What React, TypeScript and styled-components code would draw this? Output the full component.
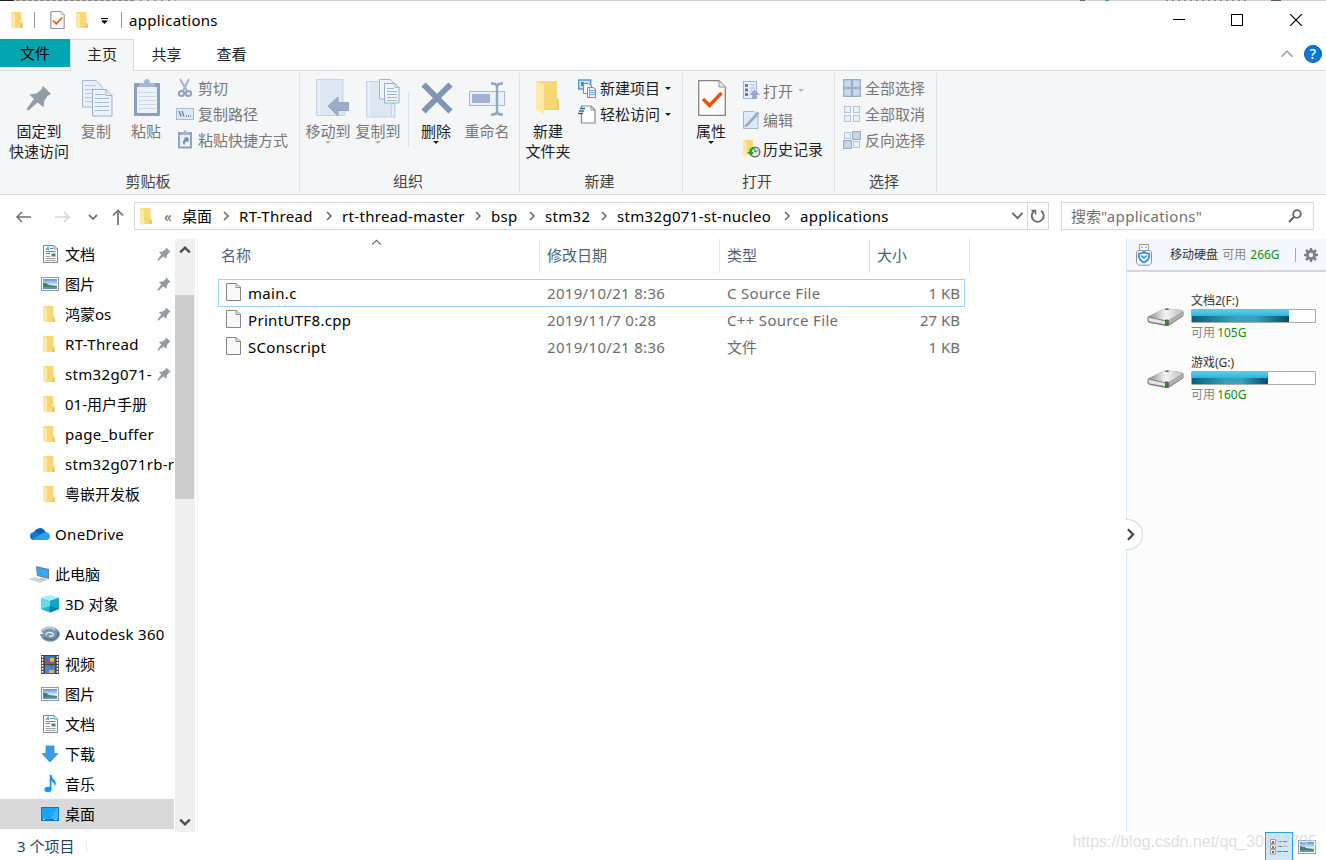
import React from 'react';
import styled, { createGlobalStyle } from 'styled-components';

const Global = createGlobalStyle`
  * { box-sizing: border-box; }
  body { margin: 0; background: #fff; overflow: hidden; }
  svg { display: block; flex: none; }
`;

const Window = styled.div`
  position: relative;
  width: 1326px;
  height: 860px;
  overflow: hidden;
  display: flex;
  flex-direction: column;
  background: #fff;
  color: #000;
  font: 15px/20px 'Noto Sans', 'Noto Sans CJK SC', sans-serif;
  white-space: nowrap;
`;

/* Sliver of the window behind, visible along the top edge. */
const TopEdge = styled.div`
  height: 1px;
  flex: none;
  background:
    linear-gradient(#222, #222) 0 0 / 14px 1px no-repeat,
    repeating-linear-gradient(90deg, #8b8580 0 4px, #c9c9c9 4px 6px) 16px 0 / 120px 1px no-repeat,
    repeating-linear-gradient(90deg, #8e8e8e 0 2px, #d2d2d2 2px 7px) 140px 0 / 36px 1px no-repeat,
    linear-gradient(#666, #666) 1080px 0 / 5px 1px no-repeat,
    linear-gradient(#2fb45a, #2fb45a) 1105px 0 / 4px 1px no-repeat,
    repeating-linear-gradient(90deg, #7f86a8 0 2px, #d2d2d2 2px 6px) 1166px 0 / 82px 1px no-repeat,
    linear-gradient(#6b5048, #6b5048) 1271px 0 / 10px 1px no-repeat,
    #d2d2d2;
`;

const Latin = styled.span`letter-spacing: 0.32px;`;
const Text = ({ children }: { children: string }) =>
  /^[\x20-\x7e]+$/.test(children) ? <Latin>{children}</Latin> : <span>{children}</span>;

/* ---------- icons ---------- */

type IconProps = { w: number; h: number; children: React.ReactNode };
const Svg = ({ w, h, children }: IconProps) => (
  <svg width={w} height={h} viewBox={`0 0 ${w} ${h}`} fill="none">{children}</svg>
);

const FolderIcon = () => (
  <Svg w={14} h={18}>
    <path d="M0 1H10.500V11.500L12 13V17H3Z" fill="#f8d775" />
    <path d="M10.500 11.500L12 13V17H8.500Z" fill="#efca63" />
    <path d="M0 1L4 3.500V18L0 16Z" fill="#ffe8a6" />
  </Svg>
);

const BigFolderIcon = () => (
  <Svg w={26} h={36}>
    <path d="M1 1H22V18L24 20.500V30H8Z" fill="#f8d775" />
    <path d="M22 18L24 20.500V30H12L22 28Z" fill="#eecb6a" />
    <path d="M1 1L9 5V35L1 30Z" fill="#ffe9ab" />
  </Svg>
);

const CheckPage = ({ w, h }: { w: number; h: number }) => (
  <svg width={w} height={h} viewBox="0 0 28 36" fill="none">
    <path d="M.7.7H21L27.300 7V35.300H.7Z" fill="#fcfcfc" stroke="#858585" strokeWidth={w < 20 ? 2 : 1.3} />
    <path d="M21 .7V7H27.300" fill="#e8e8e8" stroke="#999" />
    <path d="M5 19L11.500 25.500L23.500 13" stroke="#f0500f" strokeWidth="3.400" />
  </svg>
);

const PinShape = ({ w, h }: { w: number; h: number }) => (
  <svg width={w} height={h} viewBox="0 0 26 26">
    <path d="M17 1L25 9L21.500 11L18.500 15.500L17.500 22L11.500 17.500L2.500 25.500L.5 24L8 14L3.500 9.500L10.500 8.500L15.500 4.500Z" fill="#939ca6" />
  </svg>
);

const CopyIcon = () => (
  <Svg w={31} h={37}>
    <path d="M.5.5H14L20 6.500V27H.5Z" fill="#e7effa" stroke="#a6b8d3" />
    <path d="M3 5.500H14M3 9.500H17M3 13.500H17M3 17.500H17M3 21.500H17" stroke="#b6c7df" />
    <path d="M10.500 9.500H24L30 15.500V36H10.500Z" fill="#edf3fc" stroke="#9cafcb" />
    <path d="M24 9.500V15.500H30" stroke="#9cafcb" />
    <path d="M13 14.500H23M13 18.500H27M13 22.500H27M13 26.500H27M13 30.500H27" stroke="#a9bbd4" />
  </Svg>
);

const PasteIcon = () => (
  <Svg w={28} h={38}>
    <rect x="1" y="4" width="26" height="33" rx="1" fill="#8b9fc0" />
    <path d="M4 8H24V34H4Z" fill="#edf3fc" />
    <path d="M5 13.500H23M5 17.500H23M5 21.500H23M5 25.500H23M5 29.500H23" stroke="#ccd9e9" />
    <path d="M6 4H11Q11 0 14 0T17 4H22V8H6Z" fill="#a7b7d2" />
  </Svg>
);

const ScissorsIcon = () => (
  <Svg w={18} h={20}>
    <path d="M4 1L11 13M13 1L7 13" stroke="#a5b4cc" strokeWidth="2" />
    <circle cx="5.500" cy="15.500" r="2.600" stroke="#8ea2c1" strokeWidth="2" />
    <circle cx="12.500" cy="15.500" r="2.600" stroke="#8ea2c1" strokeWidth="2" />
  </Svg>
);

const PathIcon = () => (
  <Svg w={18} h={12}>
    <rect x=".5" y=".5" width="17" height="11" fill="#dce8f7" stroke="#a9b9d1" />
    <path d="M3 3L5 8.500M6 3L8 8.500" stroke="#667b9c" strokeWidth="1.300" />
    <path d="M10 8H11M12 8H13M14 8H15" stroke="#667b9c" strokeWidth="1.500" />
  </Svg>
);

const ShortcutIcon = () => (
  <Svg w={18} h={20}>
    <path d="M2 2H16V18.500H2Z" fill="#8fa3c3" />
    <path d="M4 5H14V16.500H4Z" fill="#edf3fc" />
    <path d="M5 2H7.500Q9-2 10.500 2H13V5H5Z" fill="#a2b4cf" />
    <path d="M7.500 7.500H12.500V12.500L11 11Q8 12.500 8.500 15.500Q5 12 9 9Z" fill="#7188ad" />
  </Svg>
);

const MoveToIcon = () => (
  <Svg w={33} h={38}>
    <path d="M.5.500H27V24L29 26V36.500H.5Z" fill="#dde7f4" stroke="#c5d3e6" />
    <path d="M3 1V36" stroke="#ecf2fa" strokeWidth="2" />
    <path d="M12 27L22 18V23.500H32.500V31.500H22V37Z" fill="#9dacc8" stroke="#94a5c2" />
  </Svg>
);

const CopyToIcon = () => (
  <Svg w={34} h={39}>
    <path d="M.5 2.500H26V24L29 25V38H.5Z" fill="#dde7f4" stroke="#c5d3e6" />
    <path d="M3 3V37" stroke="#ecf2fa" strokeWidth="2" />
    <path d="M25.500 37V26Q27 23 28.500 26V37" fill="#e9f0fa" stroke="#c5d3e6" />
    <path d="M13.500.500H24L28 4V20H13.500Z" fill="#edf3fc" stroke="#a2b4cf" />
    <path d="M18.500 4.500H29L33 8.500V24H18.500Z" fill="#f0f5fc" stroke="#99acc9" />
    <path d="M29 4.500V8.500H33M21 9.500H28M21 12.500H31M21 15.500H31M21 18.500H31M21 21.500H31" stroke="#a2b4cf" />
  </Svg>
);

const DeleteIcon = () => (
  <Svg w={32} h={32}>
    <path d="M2.500 2.500L29.500 29.500M29.500 2.500L2.500 29.500" stroke="#8294b4" strokeWidth="6" />
  </Svg>
);

const RenameIcon = () => (
  <Svg w={37} h={35}>
    <rect x=".5" y="10.500" width="35" height="14" fill="#e7f0fc" stroke="#a6b8d3" />
    <rect x="3" y="13" width="18" height="9" fill="#a2b1cc" />
    <path d="M22 2.500Q27 2 28 5Q29 2 34 2.500M28 4V32M22 33.500Q27 34 28 31Q29 34 34 33.500" stroke="#93a5c1" strokeWidth="2.400" />
  </Svg>
);

const NewItemIcon = () => (
  <Svg w={19} h={19}>
    <rect x=".7" y="1" width="12" height="9" fill="#c6e7f8" stroke="#4694bd" strokeWidth="1.300" />
    <rect x="3" y="3" width="3" height="4" fill="#4b9672" />
    <path d="M5.500 4.500H10.500L13.500 7V14.500H5.500Z" fill="#fff" stroke="#888" />
    <path d="M9.500 8.500H15L17.500 10V18.500H9.500Z" fill="#f2f7fe" stroke="#818b99" />
    <path d="M11 11.500H17M11 13.500H17M11 15.500H17" stroke="#75a7dc" />
    <path d="M11.500 9V18" stroke="#ec8b83" />
  </Svg>
);

const AccessIcon = () => (
  <Svg w={19} h={19}>
    <path d="M3.500 1H13L17 5V18H3.500Z" fill="#fff" stroke="#888" strokeWidth="1.200" />
    <path d="M13 1V5H17" stroke="#888" />
    <path d="M2 3H0V9H5V3Z" fill="#f4f6f8" />
    <path d="M2 3.500H7M1 6H6M0 8.500H5" stroke="#2468ac" strokeWidth="1.300" />
  </Svg>
);

const OpenIcon = () => (
  <Svg w={18} h={19}>
    <rect x=".5" y=".5" width="13" height="17" fill="#e9f0fa" stroke="#a5b6cf" />
    <path d="M2 3H5V6H2ZM2 7.500H5V10.500H2ZM2 12H5V15H2Z" fill="#687e9f" />
    <path d="M7 4H12M7 7H12M7 10H10" stroke="#a5b6cf" />
    <path d="M11.500 8.500L17 14H14V18H9V14H6Z" fill="#98aac7" />
  </Svg>
);

const EditIcon = () => (
  <Svg w={18} h={18}>
    <path d="M.5.500H11L15 5V17.500H.5Z" fill="#dfeaf8" stroke="#a5b6cf" />
    <path d="M15.500 1.500L5 13L2 15.500" stroke="#9babc4" strokeWidth="2.600" />
  </Svg>
);

const HistoryIcon = () => (
  <Svg w={18} h={18}>
    <path d="M0 0H10V13L3 15Z" fill="#f8d775" />
    <path d="M0 0L4 3V17L0 15Z" fill="#ffe8a6" />
    <circle cx="12" cy="12" r="4.800" fill="#e8e8e8" stroke="#777" strokeWidth="1.500" />
    <path d="M12 9V12L15 10.500" stroke="#666" />
    <path d="M12 7Q6 7 6.500 12H4L8 16L11 12H9Q9 9 12 9Z" fill="#25a42d" />
  </Svg>
);

const tiles = [[1, 1], [10, 1], [1, 10], [10, 10]];
const SelectIcon = ({ kind }: { kind: 'all' | 'none' | 'invert' }) => (
  <Svg w={18} h={18}>
    {tiles.map(([x, y], i) => {
      const on = kind === 'all' || (kind === 'invert' && (i === 1 || i === 2));
      return (
        <g key={i}>
          {on && <rect x={x - 1} y={y - 1} width="9" height="9" fill="#9badca" />}
          <rect x={x + .5} y={y + .5} width="6" height="6" fill={on ? '#c8d8ec' : '#e9f1fb'} stroke={on ? '#bfcee3' : '#b4c4da'} />
        </g>
      );
    })}
  </Svg>
);

const DocIcon = () => (
  <Svg w={16} h={18}>
    <path d="M1.500.500H12L15.500 4V17.500H1.500Z" fill="#fcfdfd" stroke="#858585" />
    <path d="M12 .5V4H15.500" stroke="#999" />
    <path d="M4 5L6 2.500L6.500 5M8 3.500H11M3.500 6.500H13.500M3.500 8.500H8" stroke="#2b9bd7" strokeWidth="1.200" />
    <rect x="9.500" y="8.500" width="4" height="3" fill="#4286a7" />
    <path d="M3.500 11.500H8M3.500 13.500H13.500M3.500 15.500H13.500" stroke="#9ba0a4" />
  </Svg>
);

const PictureIcon = () => (
  <Svg w={18} h={14}>
    <defs>
      <linearGradient id="sky" x2="0" y2="1"><stop stopColor="#4c96e8" /><stop offset=".6" stopColor="#e1f0fa" /></linearGradient>
    </defs>
    <rect x=".5" y=".5" width="17" height="13" fill="#fff" stroke="#939aa4" />
    <rect x="2" y="2" width="14" height="10" fill="url(#sky)" />
    <path d="M2 6Q5 5 8 8L16 9V10H2Z" fill="#4b8068" />
    <path d="M2 10H16V12H2Z" fill="#5c93b6" />
  </Svg>
);

const CloudIcon = () => (
  <Svg w={20} h={14}>
    <path d="M3 10Q3 4 7 2Q12-1 15 4L17 7V11H3Z" fill="#0a62b8" />
    <path d="M4 13Q0 13 0 9Q0 5 5 5Q8 5 10 7L16 13Z" fill="#1179d2" />
    <path d="M3 12L12 6.500Q19 3 20 9Q20 13 16 13H5Q4 13 3 12Z" fill="#29a2ec" />
  </Svg>
);

const ComputerIcon = () => (
  <Svg w={20} h={17}>
    <path d="M6 0L19 3V13L7 10Z" fill="#6a8193" />
    <path d="M7 1.200L18 4V11.500L8 9Z" fill="#32a8ff" />
    <path d="M11 12L17 13L15 15L9 13Z" fill="#b7bec4" />
    <path d="M0 13L5 11.500L14 14.500L10 16.500Z" fill="#d3d8dc" stroke="#b8bfc4" strokeWidth=".6" />
  </Svg>
);

const CubeIcon = () => (
  <Svg w={18} h={18}>
    <path d="M0 2.500L9 5.500V17.500L0 14Z" fill="#5fdbea" />
    <path d="M18 2.500L9 5.500V17.500L18 14Z" fill="#12a3cb" />
    <path d="M0 2.500L9 0L18 2.500L9 5.500Z" fill="#a8eef1" />
    <path d="M0 14L9 11V17.500Z" fill="#22b2cb" />
    <path d="M9 11L18 14L9 17.500Z" fill="#087f9e" />
  </Svg>
);

const AutodeskIcon = () => (
  <Svg w={20} h={17}>
    <path d="M1 4Q8-2 15 2Q21 5 19.500 10Q15 18 6 15Q1 13 0 8H4Q2 7 1 4Z" fill="#7696ac" />
    <path d="M2 5Q9-1 15 4" stroke="#bdd4df" strokeWidth="1.600" />
    <path d="M6 9.500Q6 6 10 6.500Q14.500 7 13 9.500Q11 11 9 9.500" stroke="#e2edf2" strokeWidth="1.300" />
    <path d="M18 6Q19 12 12 13.500Q6 14 4 11" stroke="#4f738c" strokeWidth="1.600" />
  </Svg>
);

const VideoIcon = () => (
  <Svg w={18} h={19}>
    <rect width="18" height="19" fill="#474747" />
    <path d="M1.500 1V19M16.500 1V19" stroke="#fff" strokeWidth="1.600" strokeDasharray="1.800 1.200" />
    <rect x="4" y="1" width="10" height="8" fill="#3975d0" />
    <rect x="4" y="10" width="10" height="8.500" fill="#4584df" />
    <path d="M4 4H8V8H4Z" fill="#86558e" />
    <path d="M9 3H13V6L11 8L9 6Z" fill="#f0bf2e" />
    <path d="M10 7L14 6V8H10Z" fill="#c84b2f" />
    <path d="M7 10H14L11 13Z" fill="#388c58" />
    <path d="M8 15H13V18H8Z" fill="#e3b430" />
  </Svg>
);

const DownloadIcon = () => (
  <Svg w={18} h={18}>
    <path d="M5 1H13V8.500H17L9 17L1 8.500H5Z" fill="#3d9ae5" stroke="#2781cc" strokeWidth=".7" />
  </Svg>
);

const MusicIcon = () => (
  <Svg w={12} h={18}>
    <ellipse cx="4" cy="14.500" rx="3.500" ry="2.800" fill="#1298f4" />
    <path d="M6.600 14V0" stroke="#1298f4" strokeWidth="1.800" />
    <path d="M6 0H7.500Q8 3.500 10.500 5Q13 8 10.500 12Q11 7.500 7 6Z" fill="#1298f4" />
  </Svg>
);

const DesktopIcon = () => (
  <Svg w={18} h={14}>
    <rect x=".5" y=".5" width="17" height="13" fill="#18a4fd" stroke="#0878c8" />
    <path d="M10 12L16 1H17V12Z" fill="#43b5fc" />
    <path d="M1 12.500H17" stroke="#0873b9" /><path d="M2 12.500H4M13 12.500H16" stroke="#b6e1ff" />
  </Svg>
);

const FileIcon = () => (
  <Svg w={15} h={20}>
    <path d="M.5.500H10L14.500 4V17.500H.5Z" fill="#f8fafa" stroke="#858585" />
    <path d="M10 .5V4.500H14.500" fill="#e4e6e7" stroke="#8d8d8d" />
  </Svg>
);

const UsbIcon = () => (
  <Svg w={16} h={22}>
    <path d="M3.500 6V.500H12.500V6" fill="#fff" stroke="#999" />
    <path d="M6 2.500V4M10 2.500V4" stroke="#888" strokeWidth="1.300" />
    <path d="M2 6.500H14L15.500 8V17Q15.500 21.200 12 21.200H4Q.5 21.200 .5 17V8Z" fill="#f8f9fb" stroke="#929292" />
    <path d="M3 9.500Q6 9.500 8 8Q10 9.500 13 9.500V13Q12 17 8 18.500Q4 17 3 13Z" fill="#fff" stroke="#2786fb" strokeWidth="1.700" />
    <path d="M5 11.500L8 14L11 11.500" stroke="#2786fb" strokeWidth="1.600" />
  </Svg>
);

const GearIcon = () => (
  <Svg w={14} h={14}>
    <circle cx="7" cy="7" r="3.600" stroke="#7b8085" strokeWidth="2.800" />
    <path d="M7 0V3M7 11V14M0 7H3M11 7H14M2 2L4 4M10 10L12 12M12 2L10 4M4 10L2 12" stroke="#7b8085" strokeWidth="2.500" />
  </Svg>
);

const DriveIcon = () => (
  <Svg w={38} h={20}>
    <defs>
      <linearGradient id="metal"><stop stopColor="#8b8b8b" /><stop offset=".5" stopColor="#f4f4f4" /><stop offset="1" stopColor="#bcbcbc" /></linearGradient>
    </defs>
    <path d="M1 10L16 2Q18 1 21 1.500L34 3Q37 4 36.500 6V9L23 18Q21 19.500 19 19L3 16Q0 15 .5 12Z" fill="#777" />
    <path d="M1 9.500L16 2Q18 1 21 1.500L34 3Q37 4 36 5L22 13Q20 14 18 13.500Z" fill="url(#metal)" />
    <path d="M1 10L19 14Q20 14 20 16V18L3 15Q.5 14 1 10Z" fill="#e4e4e7" stroke="#777" strokeWidth=".7" />
    <path d="M21.500 13.500L36 5.500V8.500L22 17.500Z" fill="#b1b1b1" />
    <ellipse cx="20" cy="2.300" rx="2" ry=".8" fill="#555" />
    <rect x="18.500" y="13" width="2.500" height="4.500" fill="#25a817" stroke="#304d27" strokeWidth=".7" />
  </Svg>
);

const DetailsIcon = () => (
  <Svg w={19} h={18}>
    <path d="M.5 1.500H5.500V5.500H.5ZM.5 6.500H5.500V10.500H.5ZM.5 11.500H5.500V16H.5Z" fill="#fff" stroke="#9b9b9b" />
    <rect x="2" y="3" width="2" height="2" fill="#467daf" />
    <rect x="2" y="8" width="2" height="2" fill="#6e8d32" />
    <rect x="2" y="13" width="2" height="2" fill="#b24521" />
    <path d="M7.500 3.500H12M13 3.500H18M7.500 8.500H12M13 8.500H18M7.500 13.500H12M13 13.500H18" stroke="#727b80" />
  </Svg>
);

type ChevronProps = { dir: 'up' | 'down' | 'right'; color?: string; size?: number; weight?: number };
const Chevron = ({ dir, color = '#666', size = 10, weight = 1.3 }: ChevronProps) => (
  <svg width={size} height={size} viewBox="0 0 10 10" fill="none" stroke={color} strokeWidth={weight}>
    <path d={dir === 'up' ? 'M1 7L5 3L9 7' : dir === 'down' ? 'M1 3L5 7L9 3' : 'M3 1L7 5L3 9'} />
  </svg>
);

/* ---------- title bar ---------- */

const TitleBar = styled.header`
  height: 38px;
  flex: none;
  display: flex;
  align-items: center;
  padding-left: 11px;
`;
const TitleDivider = styled.i<{ $l: number; $r: number }>`
  width: 1px;
  height: 16px;
  margin: 0 ${p => p.$r}px 0 ${p => p.$l}px;
  background: #999;
`;
const TitleIcon = styled.span<{ $w: number }>`width: ${p => p.$w}px;`;
const Caption = styled.h1`
  flex: 1;
  margin: 0;
  font: inherit;
`;
const WindowButton = styled.button<{ $w: number }>`
  width: ${p => p.$w}px;
  height: 38px;
  padding: 0;
  border: 0;
  background: none;
  display: grid;
  place-items: center;
`;

/* ---------- ribbon ---------- */

const TabStrip = styled.nav`
  height: 32px;
  flex: none;
  display: flex;
  border-bottom: 1px solid #d9dbdf;
`;
const Tab = styled.div<{ $kind?: 'file' | 'active' }>`
  width: ${p => (p.$kind === 'file' ? 70 : p.$kind === 'active' ? 64 : 65)}px;
  height: ${p => (p.$kind === 'file' ? 28 : 32)}px;
  line-height: ${p => (p.$kind === 'file' ? 29 : 31)}px;
  text-align: center;
  color: ${p => (p.$kind === 'file' ? '#000' : '#222')};
  ${p => p.$kind === 'file' && 'background: #00a5b0;'}
  ${p => p.$kind === 'active' && 'background: #f4f6f8; border: 1px solid #d9dbdf; border-bottom: 0; line-height: 29px;'}
`;
const StripTools = styled.div`
  margin-left: auto;
  padding: 0 4px 2px 0;
  display: flex;
  align-items: center;
  gap: 10px;
`;
const Help = styled.span`
  width: 18px;
  height: 18px;
  border-radius: 50%;
  border: 1px solid #0c5ea9;
  background: #0878da;
  color: #fff;
  text-align: center;
  font-size: 14px;
  font-weight: 500;
  line-height: 16px;
`;
const Ribbon = styled.section`
  height: 124px;
  flex: none;
  display: flex;
  background: #f4f6f8;
  border-bottom: 1px solid #d9dbdf;
`;
const Group = styled.div<{ $w: number }>`
  width: ${p => p.$w}px;
  height: 119px;
  margin-top: 2px;
  border-right: 1px solid #e0e2e5;
  display: flex;
  flex-direction: column;
`;
const Tools = styled.div<{ $l: number }>`
  height: 98px;
  display: flex;
  padding-left: ${p => p.$l}px;
`;
const GroupName = styled.div`
  padding-right: 3px;
  text-align: center;
  color: #444;
  line-height: 20px;
`;
const BigTool = styled.div<{ $w: number; $off?: boolean; $r?: number }>`
  width: ${p => p.$w}px;
  margin-right: ${p => p.$r || 0}px;
  padding-top: 6px;
  display: flex;
  flex-direction: column;
  align-items: center;
  text-align: center;
  color: ${p => (p.$off ? '#777' : '#1e1e1e')};
`;
const BigGlyph = styled.div<{ $shift?: number }>`
  height: 38px;
  margin-bottom: 4px;
  padding-left: ${p => p.$shift || 0}px;
  display: grid;
  place-items: center;
`;
const Drop = styled.i<{ $off?: boolean; $l?: number }>`
  width: 0;
  height: 0;
  margin-left: ${p => p.$l || 0}px;
  border: 3.5px solid transparent;
  border-bottom: 0;
  border-top-color: ${p => (p.$off ? '#b5b5b5' : '#1e1e1e')};
`;
const ToolDivider = styled.i`
  width: 1px;
  height: 55px;
  margin: 19px 5px 0;
  background: #dcdee1;
`;
const SmallTools = styled.div<{ $pitch: number; $top: number; $l?: number }>`
  display: grid;
  align-content: start;
  grid-auto-rows: ${p => p.$pitch}px;
  padding-top: ${p => p.$top}px;
  margin-left: ${p => p.$l || 0}px;
`;
const SmallTool = styled.div<{ $off?: boolean; $icon?: number }>`
  display: grid;
  grid-template-columns: ${p => p.$icon || 22}px auto auto;
  justify-content: start;
  align-items: center;
  color: ${p => (p.$off ? '#777' : '#1e1e1e')};
`;

type BigProps = { icon: React.ReactNode; label: React.ReactNode; w: number; off?: boolean; drop?: boolean; r?: number; shift?: number };
const Big = ({ icon, label, w, off, drop, r, shift }: BigProps) => (
  <BigTool $w={w} $off={off} $r={r}>
    <BigGlyph $shift={shift}>{icon}</BigGlyph>
    {label}
    {drop && <Drop $off={off} />}
  </BigTool>
);
type SmallProps = { icon: React.ReactNode; label: string; off?: boolean; drop?: boolean; iw?: number };
const Small = ({ icon, label, off, drop, iw }: SmallProps) => (
  <SmallTool $off={off} $icon={iw}>
    {icon}<span>{label}</span>{drop && <Drop $off={off} $l={5} />}
  </SmallTool>
);

/* ---------- address row ---------- */

const AddressRow = styled.div`
  height: 44px;
  flex: none;
  display: flex;
  align-items: flex-start;
  padding: 7px 12px 0 15px;
`;
const NavButtons = styled.div`
  width: 119px;
  height: 29px;
  display: flex;
  align-items: center;
`;
const NavSlot = styled.span<{ $w: number }>`width: ${p => p.$w}px;`;
const AddressBox = styled.div`
  width: 915px;
  height: 28px;
  border: 1px solid #d9d9d9;
  display: flex;
  align-items: center;
  padding: 0 0 1px 5px;
`;
const Laquo = styled.span`
  width: 18px;
  margin-left: 10px;
  color: #666;
  line-height: 18px;
`;
const Crumb = styled.span<{ $w: number }>`
  width: ${p => p.$w}px;
  display: flex;
  align-items: center;
  justify-content: space-between;
  padding-right: 8px;
`;
const AddressEnd = styled.div`
  margin-left: auto;
  height: 26px;
  display: flex;
  align-items: center;
  gap: 3px;
`;
const Refresh = styled.span`
  width: 21px;
  height: 26px;
  border-left: 1px solid #d9d9d9;
  display: grid;
  place-items: center;
`;
const SearchBox = styled.div`
  flex: 1;
  height: 28px;
  margin-left: 12px;
  padding: 0 11px 0 9px;
  border: 1px solid #d9d9d9;
  display: flex;
  align-items: center;
  color: #707070;
`;
const SearchGlyph = styled.span`margin-left: auto;`;

/* ---------- body ---------- */

const Body = styled.div`
  height: 593px;
  flex: none;
  display: flex;
`;
const Sidebar = styled.aside`
  width: 175px;
  height: 593px;
  overflow: hidden;
`;
const TreeRow = styled.div<{ $root?: boolean; $gap?: boolean; $selected?: boolean }>`
  height: 30px;
  width: 175px;
  margin-top: ${p => (p.$gap ? 10 : 0)}px;
  padding-left: ${p => (p.$root ? 30 : 40)}px;
  display: flex;
  align-items: center;
  background: ${p => (p.$selected ? 'linear-gradient(#d9d9d9, #d9d9d9) 0 0 / 174px 30px no-repeat' : 'none')};
`;
const TreeIcon = styled.span<{ $root?: boolean }>`
  width: 25px;
  flex: none;
  display: flex;
  justify-content: ${p => (p.$root ? 'flex-start' : 'center')};
  padding-right: 5px;
`;
const TreeLabel = styled.span<{ $pinned?: boolean }>`
  ${p => p.$pinned && 'width: 92px;'}
  flex: none;
`;
const ScrollBar = styled.div`
  width: 20px;
  height: 593px;
  padding: 2px 1px 2px 0;
  background: #f0f0f0;
  display: flex;
  flex-direction: column;
  align-items: center;
`;
const ScrollThumb = styled.div`
  width: 19px;
  height: 204px;
  margin: 37px 0 auto;
  background: #cdcdcd;
`;
const ScrollEnd = styled.span`
  height: 17px;
  display: grid;
  place-items: center;
`;
const FilePane = styled.main`
  flex: 1;
  margin-left: 2px;
  border-left: 1px solid #f2f2f2;
  padding-left: 20px;
`;
const Columns = styled.div`
  position: relative;
  height: 34px;
  display: grid;
  grid-template-columns: 322px 180px 150px 100px;
  color: #4c607a;
`;
const Column = styled.div<{ $l: number }>`
  border-right: 1px solid #e5e5e5;
  padding-left: ${p => p.$l}px;
  line-height: 33px;
`;
const SortMark = styled.span`
  position: absolute;
  left: 153px;
  top: -2px;
`;
const Rows = styled.div`
  margin-top: 6px;
`;
const FileRow = styled.div<{ $selected?: boolean }>`
  width: 747px;
  height: ${p => (p.$selected ? 28 : 27)}px;
  margin-bottom: ${p => (p.$selected ? -1 : 0)}px;
  border: ${p => (p.$selected ? '1px solid #99d1ff' : '0 solid transparent')};
  padding-left: ${p => (p.$selected ? 7 : 8)}px;
  padding-right: ${p => (p.$selected ? 4 : 5)}px;
  display: grid;
  grid-template-columns: 22px 299px 180px 150px 1fr;
  align-items: center;
  color: #6d6d6d;
`;
const FileName = styled.span`color: #000;`;
const Size = styled.span`text-align: right;`;

/* ---------- drive panel ---------- */

const DrivePanel = styled.aside`
  position: relative;
  width: 200px;
  border-left: 1px solid #d5e6f6;
  background: #fcfcfc;
  font-size: 12px;
  line-height: 16px;
`;
const DriveHeader = styled.div`
  height: 33px;
  padding: 0 8px 0 9px;
  display: flex;
  align-items: center;
  background: #f4f7fc;
  border-bottom: 2px solid #d3d8df;
  color: #333;
`;
const DriveTotal = styled.span`
  margin-left: 18px;
  word-spacing: 1px;
`;
const Muted = styled.span`color: #858585;`;
const Free = styled.span`color: #0f8f0f;`;
const HeaderRule = styled.i`
  width: 1px;
  height: 14px;
  margin: 0 8px 0 auto;
  background: #aaa;
`;
const Drives = styled.div`
  padding: 21px 9px 0 20px;
  display: grid;
  row-gap: 14px;
`;
const DriveItem = styled.div`
  height: 48px;
  display: grid;
  grid-template-columns: 44px 125px;
  align-items: center;
  color: #333;
`;
const FreeLine = styled.div`word-spacing: -1px;`;
const Meter = styled.div`
  height: 14px;
  margin: 0 0 2px;
  border: 1px solid #aaa;
  border-radius: 1px;
  background: #fff;
`;
const MeterFill = styled.div`
  height: 12px;
  background:
    linear-gradient(#55d0ed, #33b3d3 50%, transparent 50%),
    linear-gradient(90deg, #05617a, #36a2bd 45%, #36a2bd 65%, #004f69);
`;
const PanelToggle = styled.button`
  position: absolute;
  left: -1px;
  top: 280px;
  width: 17px;
  height: 31px;
  padding: 0;
  border: 1px solid #cddaea;
  border-left: 0;
  border-radius: 0 16px 16px 0;
  background: #fff;
  display: flex;
  align-items: center;
  svg { margin-left: -2px; }
`;

/* ---------- status bar ---------- */

const StatusBar = styled.footer`
  flex: 1;
  padding: 0 10px 0 17px;
  display: flex;
  align-items: center;
  color: #26436b;
`;
const StatusText = styled.span`margin-bottom: 2px;`;
const StatusRule = styled.i`
  width: 1px;
  height: 12px;
  margin-left: 12px;
  background: #ececec;
`;
const ViewButton = styled.span`
  width: 28px;
  height: 29px;
  margin: 0 5px 0 auto;
  border: 1px solid #26a0da;
  background: #cce8f5;
  display: grid;
  place-items: center;
`;
const Watermark = styled.div`
  position: absolute;
  right: 9px;
  bottom: 8px;
  font: 15.95px/20px 'Liberation Sans', sans-serif;
  color: rgba(212, 212, 212, 0.75);
`;

const crumbs: [string, number][] = [
  ['桌面', 57], ['RT-Thread', 103], ['rt-thread-master', 149], ['bsp', 54],
  ['stm32', 72], ['stm32g071-st-nucleo', 183],
];

type TreeItem = { label: string; icon: React.ReactNode; pin?: boolean; root?: boolean; gap?: boolean; selected?: boolean };
const tree: TreeItem[] = [
  { label: '文档', icon: <DocIcon />, pin: true },
  { label: '图片', icon: <PictureIcon />, pin: true },
  { label: '鸿蒙os', icon: <FolderIcon />, pin: true },
  { label: 'RT-Thread', icon: <FolderIcon />, pin: true },
  { label: 'stm32g071-', icon: <FolderIcon />, pin: true },
  { label: '01-用户手册', icon: <FolderIcon /> },
  { label: 'page_buffer', icon: <FolderIcon /> },
  { label: 'stm32g071rb-r', icon: <FolderIcon /> },
  { label: '粤嵌开发板', icon: <FolderIcon /> },
  { label: 'OneDrive', icon: <CloudIcon />, root: true, gap: true },
  { label: '此电脑', icon: <ComputerIcon />, root: true, gap: true },
  { label: '3D 对象', icon: <CubeIcon /> },
  { label: 'Autodesk 360', icon: <AutodeskIcon /> },
  { label: '视频', icon: <VideoIcon /> },
  { label: '图片', icon: <PictureIcon /> },
  { label: '文档', icon: <DocIcon /> },
  { label: '下载', icon: <DownloadIcon /> },
  { label: '音乐', icon: <MusicIcon /> },
  { label: '桌面', icon: <DesktopIcon />, selected: true },
];

const files = [
  ['main.c', '2019/10/21 8:36', 'C Source File', '1 KB'],
  ['PrintUTF8.cpp', '2019/11/7 0:28', 'C++ Source File', '27 KB'],
  ['SConscript', '2019/10/21 8:36', '文件', '1 KB'],
];

const drives = [
  { name: '文档2(F:)', free: '105G', used: 97 },
  { name: '游戏(G:)', free: '160G', used: 76 },
];

export default function App() {
  return (
    <Window>
      <Global />
      <TopEdge />
      <TitleBar>
        <FolderIcon />
        <TitleDivider $l={9} $r={15} />
        <TitleIcon $w={26}><CheckPage w={15} h={18} /></TitleIcon>
        <TitleIcon $w={24}><FolderIcon /></TitleIcon>
        <Svg w={9} h={8}><path d="M1 2.500H8" stroke="#000" /><path d="M1 4.500H8L4.500 8Z" fill="#000" /></Svg>
        <TitleDivider $l={12} $r={7} />
        <Caption><Text>applications</Text></Caption>
        <WindowButton $w={58}><Svg w={12} h={12}><path d="M0 5.500H12" stroke="#000" /></Svg></WindowButton>
        <WindowButton $w={58}><Svg w={12} h={12}><rect x=".5" y=".5" width="11" height="11" stroke="#000" /></Svg></WindowButton>
        <WindowButton $w={60}><Svg w={12} h={12}><path d="M0 0L12 12M12 0L0 12" stroke="#000" strokeWidth="1.200" /></Svg></WindowButton>
      </TitleBar>

      <TabStrip>
        <Tab $kind="file">文件</Tab>
        <Tab $kind="active">主页</Tab>
        <Tab>共享</Tab>
        <Tab>查看</Tab>
        <StripTools>
          <Chevron dir="up" color="#999" size={14} weight={1} />
          <Help>?</Help>
        </StripTools>
      </TabStrip>

      <Ribbon>
        <Group $w={300}>
          <Tools $l={4}>
            <Big w={70} icon={<PinShape w={26} h={26} />} label={<>固定到<br />快速访问</>} />
            <Big w={44} r={6} shift={2} off icon={<CopyIcon />} label="复制" />
            <Big w={44} off shift={2} icon={<PasteIcon />} label="粘贴" />
            <SmallTools $pitch={26} $top={2} $l={8}>
              <Small off icon={<ScissorsIcon />} label="剪切" />
              <Small off icon={<PathIcon />} label="复制路径" />
              <Small off icon={<ShortcutIcon />} label="粘贴快捷方式" />
            </SmallTools>
          </Tools>
          <GroupName>剪贴板</GroupName>
        </Group>
        <Group $w={220}>
          <Tools $l={3}>
            <Big w={50} off drop shift={8} icon={<MoveToIcon />} label="移动到" />
            <Big w={50} off drop shift={10} icon={<CopyToIcon />} label="复制到" />
            <ToolDivider />
            <Big w={44} r={4} drop shift={2} icon={<DeleteIcon />} label="删除" />
            <Big w={50} off icon={<RenameIcon />} label="重命名" />
          </Tools>
          <GroupName>组织</GroupName>
        </Group>
        <Group $w={163}>
          <Tools $l={4}>
            <Big w={48} icon={<BigFolderIcon />} label={<>新建<br />文件夹</>} />
            <SmallTools $pitch={26} $top={2} $l={6}>
              <Small drop icon={<NewItemIcon />} label="新建项目" />
              <Small drop icon={<AccessIcon />} label="轻松访问" />
            </SmallTools>
          </Tools>
          <GroupName>新建</GroupName>
        </Group>
        <Group $w={152}>
          <Tools $l={6}>
            <Big w={44} drop shift={1} icon={<CheckPage w={28} h={36} />} label="属性" />
            <SmallTools $pitch={29} $top={3} $l={10}>
              <Small off drop iw={20} icon={<OpenIcon />} label="打开" />
              <Small off iw={20} icon={<EditIcon />} label="编辑" />
              <Small iw={20} icon={<HistoryIcon />} label="历史记录" />
            </SmallTools>
          </Tools>
          <GroupName>打开</GroupName>
        </Group>
        <Group $w={102}>
          <Tools $l={8}>
            <SmallTools $pitch={26} $top={2}>
              <Small off icon={<SelectIcon kind="all" />} label="全部选择" />
              <Small off icon={<SelectIcon kind="none" />} label="全部取消" />
              <Small off icon={<SelectIcon kind="invert" />} label="反向选择" />
            </SmallTools>
          </Tools>
          <GroupName>选择</GroupName>
        </Group>
      </Ribbon>

      <AddressRow>
        <NavButtons>
          <NavSlot $w={39}><Svg w={17} h={14}><path d="M16 7H2M7 2L2 7L7 12" stroke="#707070" strokeWidth="1.500" /></Svg></NavSlot>
          <NavSlot $w={34}><Svg w={17} h={14}><path d="M1 7H15M10 2L15 7L10 12" stroke="#d5d5d5" strokeWidth="1.500" /></Svg></NavSlot>
          <NavSlot $w={24}><Chevron dir="down" color="#777" weight={1.800} /></NavSlot>
          <Svg w={13} h={16}><path d="M6 16V1.500M1 6.500L6 1.500L11 6.500" stroke="#707070" strokeWidth="1.700" /></Svg>
        </NavButtons>
        <AddressBox>
          <FolderIcon />
          <Laquo>«</Laquo>
          {crumbs.map(([label, width]) => (
            <Crumb key={label} $w={width}><Text>{label}</Text><Chevron dir="right" weight={1.500} /></Crumb>
          ))}
          <Text>applications</Text>
          <AddressEnd>
            <Chevron dir="down" size={13} weight={1.400} />
            <Refresh>
              <Svg w={16} h={16}>
                <path d="M4.500 2.800A6 6 0 1 0 11 2.800" stroke="#666" strokeWidth="1.800" />
                <path d="M1.500 2.500H5.500V6.500" stroke="#666" strokeWidth="1.500" />
              </Svg>
            </Refresh>
          </AddressEnd>
        </AddressBox>
        <SearchBox>
          搜索<Latin>"applications"</Latin>
          <SearchGlyph>
            <Svg w={14} h={14}>
              <circle cx="9" cy="5" r="3.800" stroke="#666" strokeWidth="1.800" />
              <path d="M6.300 7.700L1 13" stroke="#666" strokeWidth="2.200" />
            </Svg>
          </SearchGlyph>
        </SearchBox>
      </AddressRow>

      <Body>
        <Sidebar>
          {tree.map((t, i) => (
            <TreeRow key={i} $root={t.root} $gap={t.gap} $selected={t.selected}>
              <TreeIcon $root={t.root}>{t.icon}</TreeIcon>
              <TreeLabel $pinned={t.pin}><Text>{t.label}</Text></TreeLabel>
              {t.pin && <PinShape w={14} h={14} />}
            </TreeRow>
          ))}
        </Sidebar>
        <ScrollBar>
          <ScrollEnd><Chevron dir="up" color="#505050" size={12} weight={2} /></ScrollEnd>
          <ScrollThumb />
          <ScrollEnd><Chevron dir="down" color="#505050" size={12} weight={2} /></ScrollEnd>
        </ScrollBar>
        <FilePane>
          <Columns>
            <Column $l={3}>名称</Column>
            <Column $l={7}>修改日期</Column>
            <Column $l={7}>类型</Column>
            <Column $l={7}>大小</Column>
            <SortMark><Chevron dir="up" size={11} weight={1} /></SortMark>
          </Columns>
          <Rows>
            {files.map(([name, date, kind, size], i) => (
              <FileRow key={name} $selected={i === 0}>
                <FileIcon />
                <FileName><Text>{name}</Text></FileName>
                <Text>{date}</Text>
                <Text>{kind}</Text>
                <Size>{size}</Size>
              </FileRow>
            ))}
          </Rows>
        </FilePane>
        <DrivePanel>
          <DriveHeader>
            <UsbIcon />
            <DriveTotal>移动硬盘 <Muted>可用</Muted> <Free>266G</Free></DriveTotal>
            <HeaderRule />
            <GearIcon />
          </DriveHeader>
          <Drives>
            {drives.map(d => (
              <DriveItem key={d.name}>
                <DriveIcon />
                <div>
                  {d.name}
                  <Meter><MeterFill style={{ width: d.used }} /></Meter>
                  <FreeLine><Muted>可用</Muted> <Free>{d.free}</Free></FreeLine>
                </div>
              </DriveItem>
            ))}
          </Drives>
          <PanelToggle><Chevron dir="right" color="#444" size={13} weight={1.700} /></PanelToggle>
        </DrivePanel>
      </Body>

      <StatusBar>
        <StatusText>3 个项目</StatusText>
        <StatusRule />
        <ViewButton><DetailsIcon /></ViewButton>
        <PictureIcon />
      </StatusBar>
      <Watermark>https://blog.csdn.net/qq_30732795</Watermark>
    </Window>
  );
}
